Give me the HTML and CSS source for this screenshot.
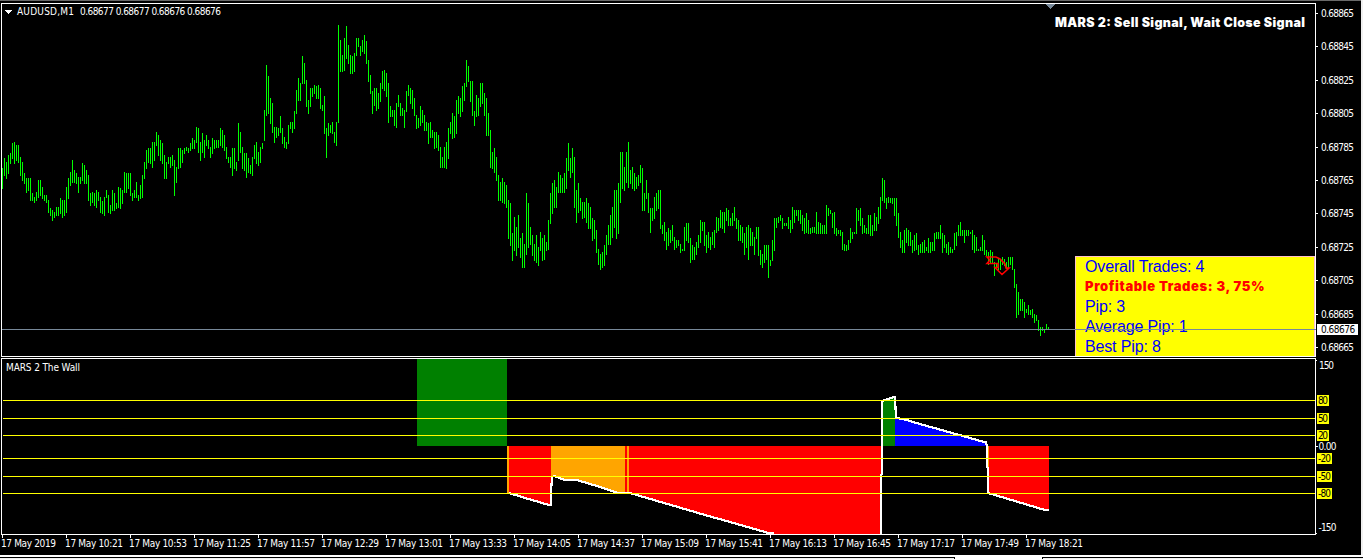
FILE: index.html
```
<!DOCTYPE html>
<html lang="en">
<head>
  <meta charset="UTF-8">
  <title>AUDUSD,M1</title>
  <link rel="stylesheet" href="styles.css">
</head>
<body>
  <div class="terminal">
    <!-- Price chart -->
    <div class="price-window">
      <svg class="chart" id="priceChart" width="1361" height="357" viewBox="0 0 1361 357">
        <rect class="top-edge" width="1361" height="1"/>
        <rect class="frame" x="1.5" y="3.5" width="1314" height="353"/>
        <path class="marker" d="M1046 4h9l-4.5 5z"/>
        <path class="bars" id="bars"/>
        <path class="sell-arrow" d="M987 257h9l4 2 5 5 1 4h3l-7 6.5-7-7h3v-4h-11l3-3.5z"/>
        <g id="priceScale"></g>
        <path class="menu-arrow" d="M5 10h7l-3.500 4z"/>
        <text class="label" x="17" y="15" textLength="57">AUDUSD,M1</text>
        <text class="label" x="80" y="15" textLength="141">0.68677 0.68677 0.68676 0.68676</text>
        <text class="signal" x="1055" y="27" textLength="250">MARS 2: Sell Signal, Wait Close Signal</text>
      </svg>
      <div class="stats">
        <p>Overall Trades: 4</p>
        <p class="profit">Profitable Trades: 3, 75%</p>
        <p>Pip: 3</p>
        <p>Average Pip: 1</p>
        <p>Best Pip: 8</p>
      </div>
      <div class="price-line"></div>
      <div class="price-now">0.68676</div>
    </div>

    <!-- Indicator, shares the y coordinates of the window -->
    <svg class="chart" id="wall" width="1361" height="198" viewBox="0 357 1361 198">
      <rect class="green" x="417" y="359" width="90" height="87"/>
      <rect class="orange" x="507" y="446" width="2" height="47"/>
      <path class="red" d="M509 446h42v59L509 493z"/>
      <path class="orange" d="M551 446h74v47h-7l-18-6-23-7h-12l-14-4z"/>
      <rect class="red" x="625" y="446" width="2" height="47"/>
      <rect class="orange" x="627" y="446" width="2" height="47"/>
      <path class="red" d="M629 446h252v88H773L629 493z"/>
      <path class="green" d="M883 446v-45l12-4v49z"/>
      <path class="blue" d="M895 446v-28l8 1 84 24v3z"/>
      <rect class="orange" x="987" y="446" width="2" height="22"/>
      <path class="red" d="M989 446h60v65l-60-18z"/>
      <path class="signal-line" d="M509 493L525 498L549 505H551V492L552 477L554 476L565 480H577L600 487L618 493H630L705 515L730 522L770 533.500H774"/>
      <path class="signal-line" d="M881 534V475L882 474V401L894 397H895L896 418L903 419L920 424L986 442.500L987 446V467L988 468V493L1045 510H1049"/>
      <rect class="frame" x="1.5" y="358.500" width="1314" height="176"/>
      <text class="label" x="6" y="371" textLength="74">MARS 2 The Wall</text>
      <text class="label" x="1319" y="369" textLength="15">150</text>
      <text class="label" x="1318.500" y="450" textLength="18">0.00</text>
      <text class="label" x="1318.500" y="531" textLength="18">-150</text>
      <path class="tick" d="M1316 360.500h1M1316 446.500h2M1316 533.500h1"/>
      <g id="levels"></g>
      <g id="timeScale"></g>
    </svg>

    <!-- Tabs under the chart -->
    <div class="tabs">
      <div class="tab-left"></div>
      <div class="tab-right"></div>
    </div>
  </div>
  <script src="script.js"></script>
</body>
</html>
```
FILE: styles.css
```
body {
  margin: 0;
  background: #f0f0f0;
  overflow: hidden;
}

.terminal {
  width: 1363px;
  height: 559px;
  display: flex;
  flex-direction: column;
}

.price-window {
  position: relative;
  width: 1361px;
  height: 357px;
}

.chart {
  display: block;
  background: #000;
  shape-rendering: crispEdges;
}

.top-edge {
  fill: #696969;
}

.frame {
  fill: none;
  stroke: #fff;
}

.bars {
  stroke: #00ff00;
  fill: none;
}

.tick {
  stroke: #fff;
}

.marker {
  fill: #778899;
}

.menu-arrow {
  fill: #fff;
}

.sell-arrow {
  fill: none;
  stroke: #ff0000;
  stroke-width: 1.6;
  shape-rendering: auto;
}

.label {
  fill: #fff;
  font: 10px "DejaVu Sans Condensed", "DejaVu Sans", sans-serif;
  white-space: pre;
}

.signal {
  fill: #fff;
  font: 900 12.5px Inter, "Liberation Sans", Arial, sans-serif;
}

/* Trade statistics */
.stats {
  position: absolute;
  left: 1075px;
  top: 256px;
  width: 238px;
  height: 99px;
  border: 1px solid #ffc0cb;
  border-bottom: 0;
  background: #ffff00;
}

.stats p {
  margin: 0 0 0 9px;
  height: 20px;
  line-height: 20px;
  font-family: "Liberation Sans", Arial, sans-serif;
  font-size: 16px;
  letter-spacing: -0.15px;
  color: #0000ff;
  white-space: nowrap;
}

.stats .profit {
  font: 900 13px/19px Inter, "DejaVu Sans", sans-serif;
  letter-spacing: 0.62px;
  color: #ff0000;
}

.price-line {
  position: absolute;
  left: 2px;
  top: 329px;
  width: 1314px;
  height: 1px;
  background: #778899;
}

.price-now {
  position: absolute;
  left: 1317px;
  top: 324px;
  width: 37px;
  height: 11px;
  padding-left: 4px;
  background: #fff;
  color: #000;
  font: 10px/11px "DejaVu Sans Condensed", "DejaVu Sans", sans-serif;
  letter-spacing: -0.5px;
}

/* Indicator */
.green { fill: #008000; }
.orange { fill: #ffa500; }
.red { fill: #ff0000; }
.blue { fill: #0000ff; }

.signal-line {
  fill: none;
  stroke: #fff;
  stroke-width: 2.2;
}

.level {
  stroke: #ffff00;
}

.level-box {
  fill: #ffff00;
}

.level-text {
  fill: #000;
}

/* Bottom tabs */
.tabs {
  display: flex;
  justify-content: space-between;
  height: 4px;
  padding-top: 2px;
  box-sizing: border-box;
  background: #fff;
}

.tab-left,
.tab-right {
  border-top: 1px solid #000;
  background: #f0f0f0;
}

.tab-left {
  width: 954px;
  border-right: 1px solid #000;
}

.tab-right {
  width: 320px;
  border-left: 1px solid #000;
}
```
FILE: script.js
```
// Bars as "high-low" in chart pixels, one bar every 2px
const bars = {
  2: `168-189 158-176 162-179 155-174 153-164 143-159 142-164 145-161 145-163 157-176 162-181 173-184
    178-193 178-191 178-201 193-201 197-203 192-201 180-198 180-196 187-199 195-201 195-203 200-213
    208-216 210-221 212-218 207-216 207-216 198-214 200-218 200-216 187-213 178-199 172-186 160-183
    170-183 173-184 177-193 177-184 163-181 165-184 170-184 175-201 193-206 192-203 193-206 190-208
    192-201 197-213 201-214 197-216 190-198 195-213 205-214 190-211 193-211 203-209 187-208 188-209
    190-204 172-193 173-193 173-189 173-196 193-201 190-198 182-198 195-201 185-199 175-198 162-179
    150-169 148-163 148-164 142-168 142-161 132-146 135-156 140-161 143-164 155-179 162-179 157-164
    157-168 155-166 160-196 167-183 148-169 148-168 150-163 148-154 147-151 148-153 143-151 138-149
    140-149 127-143 128-153 142-161 133-153 140-158 135-146 140-149 147-158 138-154 140-149 140-148
    140-148 128-146 130-148 135-151 147-159 157-163 157-168 148-176 148-169 162-171 123-161 132-153
    147-169 153-171 153-178 158-173 165-174 157-176 145-159 142-164 152-166 147-163 143-149 110-141
    65-116 76-114`,
  270: `98-124 103-133 127-143 127-138 128-136 116-133 128-144 137-148 142-149 125-144 122-129 122-133
    111-129 90-114 78-101 83-101 56-84 63-84 80-107 100-114 88-107 88-97 85-94 86-99
    85-99 88-109 105-111 96-134 128-158 123-136 125-133 122-134 132-143 122-146 25-123 40-72
    55-72 38-71 26-59 45-64 55-74 56-74 53-72 38-56 38-47 46-56 40-52 35-54
    41-64 60-82 75-94 91-114 88-106 88-111 93-109 83-102 71-89 70-91 73-97 83-123
    106-117 110-117 110-126 103-128 95-107 103-116 108-116 110-128 91-112 85-96 88-104 90-109
    98-116 115-129 118-128 106-126 110-123 115-131 122-131 123-144 122-138 130-138 132-149 132-148
    135-151 147-168 157-168 147-168 142-169 128-159 122-134 113-139 116-138 100-134 96-114 98-117
    86-112 83-101 60-87 66-82 81-102 81-116 111-126 95-117 98-116 83-107 83-104 93-116
    98-136 113-136`,
  490: `130-168 152-169 148-173 157-181 175-201 182-201 178-203 182-204 185-208 200-239 203-246 233-261
    217-251 227-256 215-248 238-258 233-268 244-268 193-255 203-248 227-245 235-256 244-261 235-263
    247-266 232-251 238-261 235-260 242-251 220-250 193-224 183-214 180-208 187-208 172-193 175-193
    178-193 173-193 158-189 143-171 158-178 148-173 157-208 190-223 183-213 198-211 202-219 202-218
    198-223 203-229 207-229 218-241 220-239 230-253 249-265 254-270 252-268 245-266 235-255 225-245
    215-245 207-238 190-228 190-239 183-234 152-203 152-189 167-191 152-183 142-188 170-184 167-189
    173-191 177-189 175-186 165-183 168-211 193-211 180-199 193-213 208-233 208-221 197-219 193-211
    190-209 190-229 225-234 222-241 232-250 228-246 230-243 225-241 237-250 240-248 240-246 244-253
    249-251 227-251 223-241 223-243 238-263 245-260 247-260 242-255 235-248 220-243 222-231 222-246
    235-253 232-248 237-250 232-245 230-248 217-233 218-231 210-228 212-229 212-233 208-221 210-226
    218-226 213-226 207-221 218-229 220-241 225-241 227-243 233-255 227-248 225-260`,
  750: `228-246 232-246 237-255 227-239 227-256 250-265 254-268 245-263 245-260 245-278 260-266 240-261
    218-251 218-228 217-223 215-221 218-229 223-226 223-226 217-229 220-233 207-229 210-223 210-216
    210-221 210-224 215-231 218-234 213-233 220-234 228-234 227-233 227-233 212-234 222-234 223-234
    225-234 225-234 205-234 208-216 210-214 213-228 212-234 228-236 230-234 230-236 232-250 244-251
    245-251 240-250 228-243 232-239 232-234 208-234 210-221 208-226 218-234 225-233 228-234 215-234
    215-236 225-236 213-231 217-231 207-224 197-219 178-201 180-203 198-209 197-203 198-203 198-204
    198-216 198-226 213-238 232-248 240-253 230-253 228-243 230-246 232-246 240-253 235-251 233-250
    245-255 244-253 242-253 240-253 247-251 238-253 242-253 242-251 233-251 232-239 232-239 225-239
    233-253 235-248 244-253 242-255 247-253 249-253 233-250 232-246 225-236 222-236 230-236 230-243
    230-236 230-236 232-234 230-250 235-253 237-251 249-251 247-251 235-251 240-255 250-256 252-265
    250-263 252-263 262-276 263-270 258-270 260-270 257-265 259-266 262-269 257-269 257-265 257-270
    269-288 284-318 292-315 299-311 299-311 302-318 309-313 305-315 310-315 309-318 314-323 315-321
    320-331 327-336 327-331 330-333 324-330 327-330`
};

let d = '';
for (const start in bars) {
  bars[start].trim().split(/\s+/).forEach((bar, i) => {
    const [high, low] = bar.split('-');
    d += `M${+start + i * 2 + 0.5} ${high}V${low}`;
  });
}
document.getElementById('bars').setAttribute('d', d);

// Price scale
let scale = '';
for (let i = 0; i <= 10; i++) {
  const y = Math.round(13 + i * 33.4);
  scale += `<path class="tick" d="M1316 ${y + 0.5}h2"/>
    <text class="label" x="1321" y="${y + 4}" textLength="33">${(0.68865 - i * 0.0002).toFixed(5)}</text>`;
}
document.getElementById('priceScale').innerHTML = scale;

// Indicator levels
const levels = [[80, 400], [50, 418], [20, 435], [-20, 458], [-50, 476], [-80, 493]];
document.getElementById('levels').innerHTML = levels.map(([value, y]) => {
  const w = value < 0 ? 15 : 12;
  return `<path class="level" d="M3 ${y + 0.5}H1315"/>
    <rect class="level-box" x="1317" y="${y - 5}" width="${w}" height="11"/>
    <text class="label level-text" x="1318" y="${y + 4}" textLength="${w - 2}">${value}</text>`;
}).join('');

// Time scale, a label every 32 minutes
let times = '';
for (let i = 0; i <= 16; i++) {
  const m = 589 + i * 32;
  const time = Math.floor(m / 60) + ':' + String(m % 60).padStart(2, '0');
  const x = 2 + i * 64;
  times += `<path class="tick" d="M${x + 0.5} 535v3"/>
    <text class="label" x="${x - 1}" y="547" textLength="${i ? 58 : 55}">17 May ${i ? time : '2019'}</text>`;
}
document.getElementById('timeScale').innerHTML = times;
```
